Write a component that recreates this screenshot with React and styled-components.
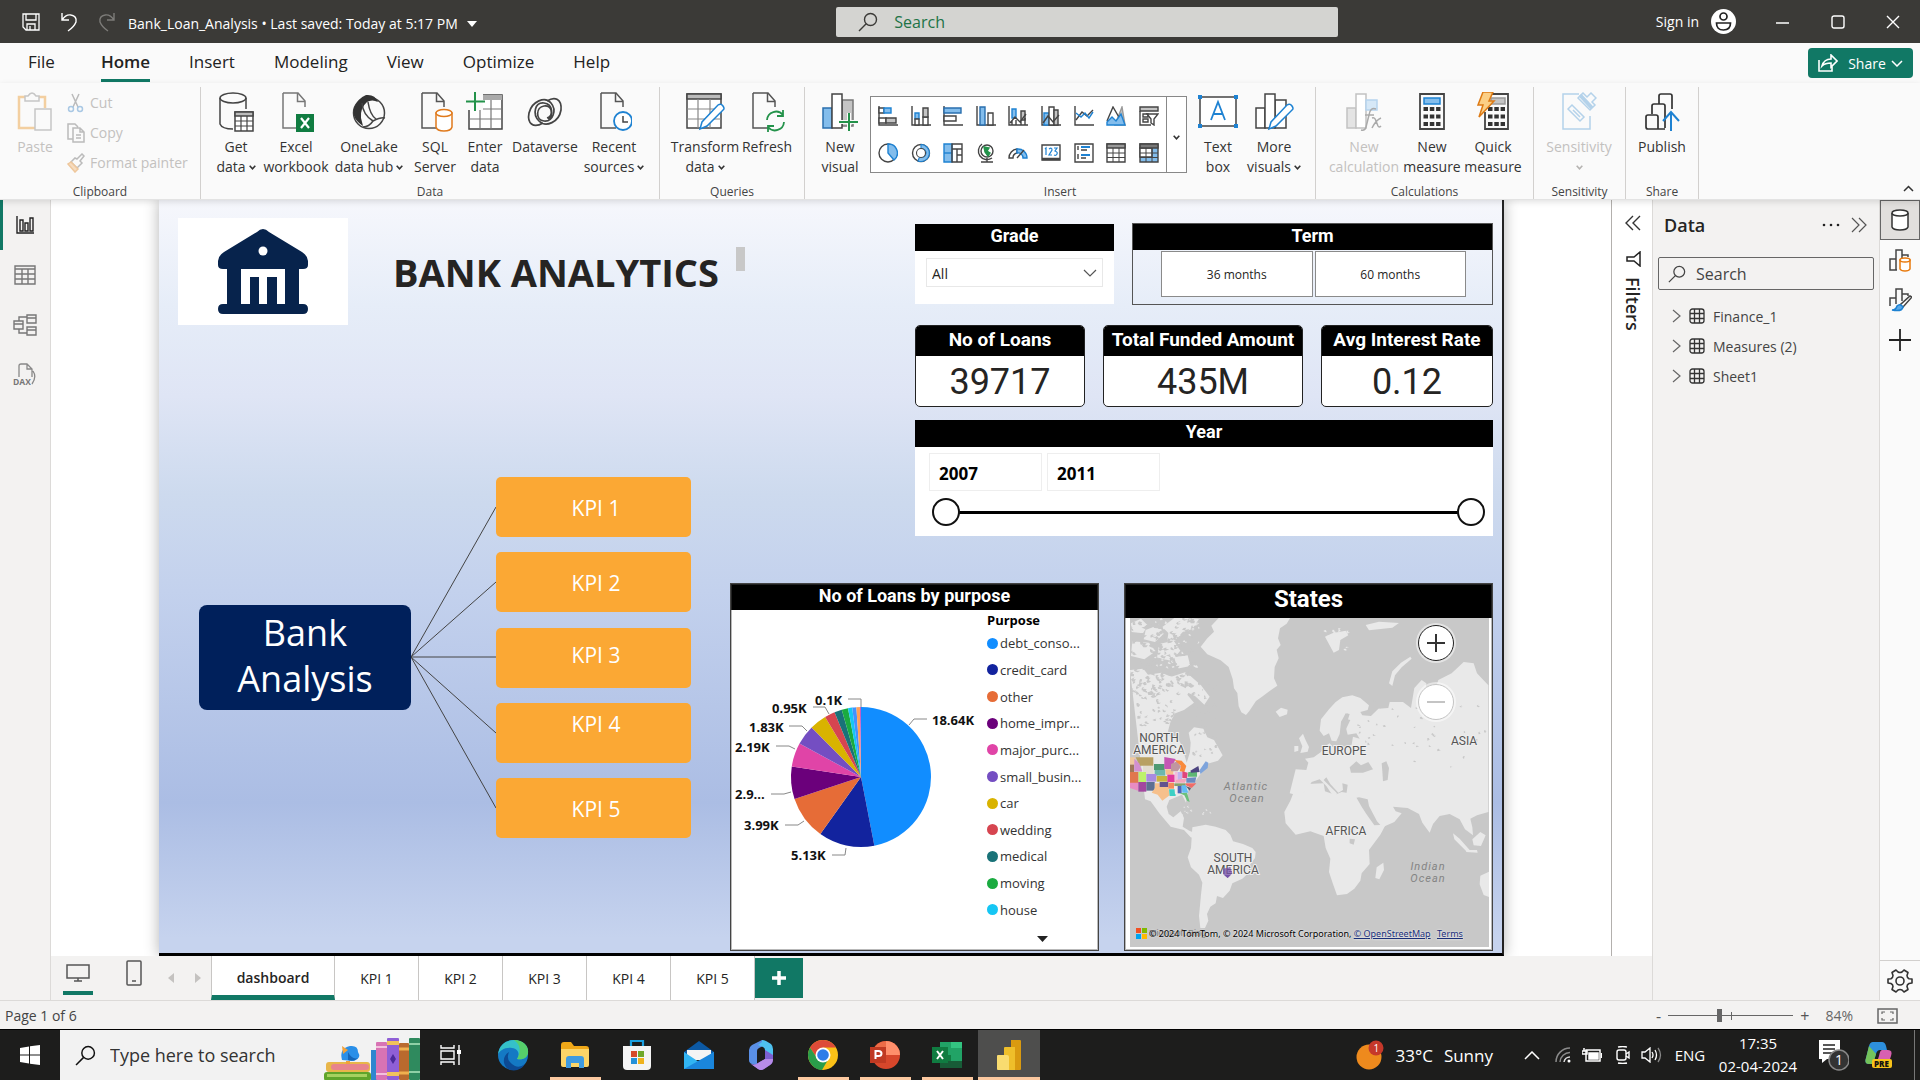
import React from "react";
import styled, { createGlobalStyle, css } from "styled-components";

const UI = `"Open Sans", "Noto Sans", sans-serif`;
const DIN = `Roboto, "Liberation Sans", sans-serif`;
const GREEN = "#117865";

const Global = createGlobalStyle`
  *, *::before, *::after { box-sizing: border-box; }
  html, body { margin: 0; padding: 0; }
  body { font-family: ${UI}; font-size: 14px; color: #252423; overflow: hidden; }
  button, input, select { font: inherit; color: inherit; }
  button { background: none; border: 0; padding: 0; margin: 0; cursor: pointer; }
  svg { display: block; flex: none; }
  h1, h2, ul, p { margin: 0; padding: 0; }
  ul { list-style: none; }
`;

/* ---------- icon helper ---------- */
const Icon = ({ w = 16, h = w, box, children, s = "#444", sw = 1.5, f = "none" }) => (
  <svg width={w} height={h} viewBox={box || `0 0 ${w} ${h}`} fill={f} stroke={s} strokeWidth={sw} aria-hidden="true">
    {children}
  </svg>
);
const BLUE = "#1e82d2";
const LIGHT = "#83bdec";
const MID = "#c4c4c4";

const Chevron = ({ s = "#333", w = 7 }) => (
  <Icon w={w} h={5} box="0 0 7 5" s={s} sw={1.6}><path d="M.7.8 3.5 3.8 6.3.8" /></Icon>
);
const Magnifier = ({ size = 20, s = "#444" }) => (
  <Icon w={size} box="0 0 20 20" s={s} sw={1.4}><circle cx="12.5" cy="7.5" r="6" /><path d="M8.2 11.8 1 19" /></Icon>
);
const Doc = ({ s = "#555" }) => <><path d="M5 1h15l7 8v6M5 1v35h15" stroke={s} fill="none" /><path d="M19.5 1v8.500H27" stroke={s} fill="none" /></>;
const Pencil = () => <path d="M15 37l2-7L33 13q3-2 5 1t0 4L22 34z" fill="#fff" stroke={BLUE} />;

const RI = {
  paste: <Icon w={36} h={40} s="#c6c6c6"><path d="M8 5H2v31h16" stroke="#f3cfa0" strokeWidth="2.500" /><path d="M22 5h6v11" stroke="#f3cfa0" strokeWidth="2.500" /><path d="M8 9V4h3q4-6 8 0h3v5z" /><path d="M18 17h16v21H18z" fill="#fafafa" /></Icon>,
  getData: <Icon w={36} h={40}><ellipse cx="15" cy="6" rx="13" ry="5" /><path d="M2 6v26q2 5 13 5M28 6v11" /><path d="M17 20h18v19H17z" fill="#fff" /><path d="M17 20h18v4H17z" fill="#bbb" /><path d="M23 24v15M29 24v15M17 29h18M17 34h18" strokeWidth="1.200" /></Icon>,
  excel: <Icon w={36} h={40}><Doc s="#777" /><path d="M18 22h18v18H18z" fill="#107c41" stroke="none" /><path d="m23 26 8 10m0-10-8 10" stroke="#fff" strokeWidth="2.200" /></Icon>,
  onelake: <Icon w={36} h={40}><circle cx="18" cy="21" r="15.500" /><path d="M15 3q9-1 12 7-6-3-11 0-7 6-6 16l2 8Q0 26 3 16 7 6 15 3z" fill="#333" stroke="none" /><path d="M11 11q1 12 11 18 8-4 12-3M17 10q2 13 8 17M22 29q-4 6-10 6" /></Icon>,
  sql: <Icon w={36} h={40}><Doc /><path d="M19 21v14q1 4 8 4t8-4V21z" fill="#fff" stroke="#e07a1c" /><ellipse cx="27" cy="21" rx="8" ry="3.500" fill="#fff" stroke="#e07a1c" /></Icon>,
  enter: <Icon w={38} h={40}><path d="M3 3h33v34H3z" fill="#fff" /><path d="M16 3h20v5H16z" fill="#aaa" stroke="none" /><path d="M3 17h33M3 27h33M14 8v29M25 8v29" stroke="#777" strokeWidth="1.200" /><path d="M0 0h17v18H0z" fill="#fafafa" stroke="none" /><path d="M9 0v19M0 9.500h19" stroke="#23924a" strokeWidth="2" /></Icon>,
  dataverse: <Icon w={38} h={40} sw={1.7}><path d="M17 31C7 37 1 31 3 21 6 9 19 4 25 11s2 19-7 18-8-14 0-15 10 9 4 13" /><path d="M21 9c8-5 15-2 14 9-2 12-15 18-22 11S9 10 18 11s10 13 3 15" /></Icon>,
  recent: <Icon w={36} h={40}><Doc /><circle cx="27" cy="29" r="9" fill="#fff" stroke={BLUE} strokeWidth="1.800" /><path d="M27 24v6h5" /></Icon>,
  transform: <Icon w={40} h={40}><path d="M2 2h34v34H2z" fill="#fff" /><path d="M2 2h34v5H2z" fill="#bbb" /><path d="M2 17h34M2 27h34M13 7v29M25 7v29" stroke="#888" strokeWidth="1.200" /><Pencil /></Icon>,
  refresh: <Icon w={38} h={40}><Doc /><path d="M19 28a9 9 0 0 1 16-5m0-5v6h-6M36 30a9 9 0 0 1-16 5m0 5v-6h6" stroke="#23924a" strokeWidth="1.800" /></Icon>,
  newVisual: <Icon w={38} h={40}><path d="M2 16h9v20H2z" fill={LIGHT} stroke="#2a6fae" /><path d="M21 8h11v26H21z" fill={MID} stroke="#777" /><path d="M11 2h10v34H11z" fill="#fff" /><path d="M18 30h19M28 21v18" stroke="#fafafa" strokeWidth="4" /><path d="M18 30h19M28 21v18" stroke="#23924a" strokeWidth="2" /></Icon>,
  textBox: <Icon w={40} h={40}><path d="M2 5h36v29H2z" fill="#fff" /><path d="M0 3h4v4H0zM36 3h4v4h-4zM0 32h4v4H0zM36 32h4v4h-4z" fill={BLUE} stroke="none" /><path d="m13 28 7-18 7 18m-12-6h10" stroke={BLUE} strokeWidth="1.800" /></Icon>,
  more: <Icon w={40} h={40}><path d="M2 16h9v20H2zM21 8h11v28H21z" fill="#fff" /><path d="M11 2h10v34H11z" fill="#fff" /><Pencil /></Icon>,
  newCalc: <Icon w={38} h={40} s="#c2c2c2"><path d="M2 16h9v20H2z" fill="#e4e4e4" /><path d="M11 2h10v34H11z" fill="#fff" /><path d="M21 8h11v10H21z" fill="#d6e8f7" stroke="#b6d4ee" /><path d="M31 17q-6-2-7 6l-3 12q-1 4-5 3M20 23h9M27 26q3-1 4 3l2 5q1 2 3 0M36 26q-5 2-9 10" stroke="#aaa" /></Icon>,
  newMeasure: <Icon w={26} h={40}><path d="M1 2h24v35H1z" strokeWidth="1.800" /><path d="M5 6h16v6H5z" fill={LIGHT} stroke={BLUE} /><path d="M4.500 17h17M4.500 24.500h17M4.500 32h17" stroke="#333" strokeWidth="4" strokeDasharray="4.500 1.800" /></Icon>,
  quick: <Icon w={34} h={40}><path d="M12 2h20v35H9V20" strokeWidth="1.800" /><path d="M15 6h14v6H15z" fill={MID} stroke="#999" /><path d="M12 17h17M12 24.500h17M12 32h17" stroke="#333" strokeWidth="4" strokeDasharray="4.500 1.800" /><path d="M7 0h10l-4 9h5L3 25l4-12H2z" fill="#fbcf86" stroke="#dd7a14" /></Icon>,
  sensitivity: <Icon w={36} h={40} s="#b4d2ea"><path d="M29 24v13H2V2h16" /><path d="m7 17 4-4 12 12-4 4zM12 18l7 7" /><path d="m17 6 5-5 4 4 4-4 5 5-4 4 3 3-5 5z" fill="#fafafa" /><path d="m19 3 12 13" strokeWidth="4" /></Icon>,
  publish: <Icon w={36} h={40} s="#333" sw={1.700}><path d="M21 37H4q-2 0-2-2V25q0-2 2-2h8q2 0 2 2v12M8 22v-8q0-2 2-2h9q2 0 2 2v22M15 12V4q0-2 2-2h9q2 0 2 2v13" /><path d="M27 39V20m-8 9 8-9 8 9" stroke={BLUE} strokeWidth="2" /></Icon>,
};

const g = (children) => <Icon w={20} box="0 0 20 20" sw={1.400}>{children}</Icon>;
const AX = <path d="M1 0v19h19" />;
const GALLERY = [
  ["Stacked bar chart", g(<>{AX}<path d="M1 2h5v5H1zM1 12h7v5H1z" fill="#fff" /><path d="M6 2h7v5H6z" fill={LIGHT} stroke={BLUE} /><path d="M8 12h10v5H8z" fill={MID} /></>)],
  ["Stacked column chart", g(<>{AX}<path d="M4 7h4v6H4z" fill={LIGHT} stroke={BLUE} /><path d="M4 13h4v6H4zM12 11h5v8h-5z" fill="#fff" /><path d="M12 2h5v9h-5z" fill={MID} /></>)],
  ["Clustered bar chart", g(<>{AX}<path d="M1 2h17v5H1z" fill={LIGHT} stroke="#2a6fae" /><path d="M1 10h12v5H1z" fill="#fff" /></>)],
  ["Clustered column chart", g(<>{AX}<path d="M4 1h5v18H4z" fill={LIGHT} stroke="#2a6fae" /><path d="M12 7h5v12h-5z" fill="#fff" /></>)],
  ["Line and stacked column chart", g(<>{AX}<path d="M4 3h4v9H4z" fill={LIGHT} stroke={BLUE} /><path d="M13 5h4v9h-4z" fill={MID} /><path d="m2 17 5-6 5 5 6-8M4 15v4M8 14v5M13 14v5M17 12v7" /></>)],
  ["Line and clustered column chart", g(<>{AX}<path d="M3 7h5v12H3z" fill={LIGHT} stroke={BLUE} /><path d="M8 1h5v18H8z" fill="#fff" /><path d="M13 4h4v15h-4z" fill={MID} /><path d="m2 17 5-7 5 6 6-7" /></>)],
  ["Line chart", g(<>{AX}<path d="m2 14 6-8 5 4 6-6" /><path d="m2 7 5 4 4-4 4 5 4-6" stroke={BLUE} /></>)],
  ["Area chart", g(<><path d="M9 19 16 1l3 18z" fill={MID} stroke="#999" /><path d="M1 15 7 1l7 12" /><path d="M1 19v-3l5-5 4 4 5-7 4 11z" fill={LIGHT} stroke={BLUE} /></>)],
  ["Slicer", g(<><path d="M1 1h18v4H1z" fill={MID} /><path d="M1 5v14h11M4 8h5v3H4zM4 13h5v3H4z" /><path d="M8 8h11l-4 5v6l-3-2v-4z" fill="#fff" /></>)],
  ["Pie chart", g(<><circle cx="10" cy="10" r="9" fill="#fff" /><path d="M10 1a9 9 0 0 1 6 16l-6-7z" fill={LIGHT} stroke={BLUE} /></>)],
  ["Donut chart", g(<><circle cx="10" cy="10" r="8.500" fill="#fff" /><path d="M10 1.500a8.500 8.500 0 1 1-3 16.500l1.500-4a4.500 4.500 0 1 0 1.500-8.500z" fill={LIGHT} stroke={BLUE} strokeWidth="1.100" /><circle cx="10" cy="10" r="4.500" fill="#fff" strokeWidth="1.100" /></>)],
  ["Treemap", g(<><path d="M1 1h8v18H1z" fill={LIGHT} stroke={BLUE} /><path d="M1 10h8" stroke={BLUE} /><path d="M9 1h10v18H9zM9 6h10M14 6v13M14 12h5" /></>)],
  ["Map", g(<><circle cx="11" cy="8" r="6" /><path d="M8 4l5 1-2 3 3 2-2 3-3-4z" fill="#23924a" stroke="#23924a" /><path d="M6 1a8.500 8.500 0 0 0 10 14M11 15v4M5 19h12" /></>)],
  ["Gauge", g(<><path d="M1 15a9 9 0 0 1 8-9v4a5 5 0 0 0-4 5z" fill="#fff" /><path d="M9 6a9 9 0 0 1 10 9h-4a5 5 0 0 0-6-5z" fill={LIGHT} stroke={BLUE} /><path d="m9 15 7-8" /></>)],
  ["Card", g(<><path d="M1 2h18v15H1z" fill="#fff" /><path d="M1 16h18" strokeWidth="2.500" /><path d="m4 6 1-1v7M8 6q3-2 3 1l-3 5h3M13 5h3l-2 3q3 1 2 3t-3 1" stroke={BLUE} strokeWidth="1.200" /></>)],
  ["Multi-row card", g(<><path d="M1 1h18v18H1zM4 3v4M4 11v5" fill="#fff" /><path d="M7 4h9M7 12h9" stroke={BLUE} strokeWidth="2" /><path d="M7 7h6M7 15h5" /></>)],
  ["Table", g(<><path d="M1 1h18v18H1z" fill="#fff" /><path d="M1 1h18v4H1z" fill="#999" /><path d="M1 10h18M1 14.500h18M7 5v14M13 5v14" strokeWidth="1" /></>)],
  ["Matrix", g(<><path d="M1 1h18v18H1z" fill={LIGHT} /><path d="M1 5h12v9H1z" fill="#fff" /><path d="M1 1h18v4H1z" fill="#777" /><path d="M1 10h18M1 14.500h18M7 5v14M13 5v14" strokeWidth="1" /></>)],
];

/* ---------- shell ---------- */
const Shell = styled.div`
  display: flex; flex-direction: column; height: 100vh; min-height: 760px; background: #fff;
`;
const TitleBar = styled.header`
  display: flex; align-items: center; flex: none; height: 43px; padding-left: 22px;
  background: #3b3a37; color: #fff;
`;
const Side = styled.div`display: flex; align-items: center; flex: ${(p) => p.$grow} 1 0; justify-content: ${(p) => p.$end ? "flex-end" : "flex-start"};`;
const FileName = styled.button`
  display: flex; align-items: center; gap: 9px; margin-left: 12px; line-height: 20px; white-space: nowrap; padding-top: 4px;
`;
const QuickButton = styled.button`display: grid; place-items: center; width: 18px; & + & { margin-left: 20px; }`;
const TopSearch = styled.label`
  display: flex; align-items: center; gap: 14px; width: 502px; height: 30px; padding: 0 22px;
  background: #d4d4d1; border-radius: 2px;
  input { flex: 1; min-width: 0; border: 0; background: none; outline: 0; font-size: 16px; color: #217346; }
  input::placeholder { color: #217346; opacity: 1; }
`;
const SignIn = styled.button`display: flex; align-items: center; gap: 12px; margin-right: 19px;`;
const WinButton = styled.button`width: 55px; height: 43px; display: grid; place-items: center;`;

const MenuRow = styled.nav`
  display: flex; align-items: center; flex: none; height: 40px; padding: 0 7px 0 28px; gap: 39px; background: #fafafa;
  > button:first-child { margin-right: 7px; }
`;
const MenuTab = styled.button`
  height: 38px; font-size: 17px; line-height: 34px; border-bottom: 3px solid transparent; color: #222;
  ${(p) => p.$active && css`font-weight: 600; border-color: ${GREEN};`}
`;
const ShareButton = styled.button`
  display: flex; align-items: center; justify-content: center; gap: 10px; margin: 0 0 0 auto; width: 105px; height: 30px;
  border-radius: 4px; background: ${GREEN}; color: #fff;
  span { display: flex; align-items: center; gap: 5px; }
`;

const Ribbon = styled.div`
  display: flex; flex: none; height: 117px; padding-top: 4px; background: #fafafa;
  border-bottom: 1px solid #e3e3e3; box-shadow: 0 2px 6px rgba(0,0,0,.12); z-index: 2;
`;
const Group = styled.section`
  display: flex; flex-direction: column; width: ${(p) => p.$w}px; height: 112px; border-right: 1px solid #d2d0ce; flex: none;
`;
const GroupBody = styled.div`display: flex; flex: 1; padding: 1px 0 0 ${(p) => p.$pad || 0}px;`;
const GroupLabel = styled.div`font-size: 12px; line-height: 14px; text-align: center; color: #444;`;
const ToolButton = styled.button`
  display: flex; flex-direction: column; align-items: center; width: ${(p) => p.$w}px; height: 90px; flex: none; padding-top: 4px;
  font-size: 14px; line-height: 20px; white-space: nowrap; color: ${(p) => (p.disabled ? "#c3c1bf" : "#333")};
  > svg { margin: 0 0 5px; }
  > span { display: flex; align-items: center; gap: 3px; min-height: 20px; }
`;
const SmallTools = styled.div`display: flex; flex-direction: column; margin-left: 9px;`;
const SmallTool = styled.button`
  display: flex; align-items: center; gap: 5px; height: 30px; line-height: 20px; color: #c3c1bf; white-space: nowrap;
`;
const GalleryBox = styled.div`
  display: flex; width: 317px; height: 77px; margin: 8px 8px 0 6px; background: #fff; border: 1px solid #888;
`;
const GalleryGrid = styled.div`display: grid; grid-template-columns: repeat(9, 1fr); flex: 1; padding: 1px; align-items: center; justify-items: center;`;
const GalleryMore = styled.button`width: 20px; border-left: 1px solid #888; display: grid; place-items: center; padding-top: 6px;`;
const Collapse = styled.button`margin: auto 6px 7px auto;`;

const Tool = ({ icon, w, a, b, drop, disabled }) => (
  <ToolButton $w={w} disabled={disabled}>
    {RI[icon]}
    <span>{a}</span>
    {(b || drop) && <span>{b}{drop && <Chevron s={disabled ? "#b5b3b1" : "#333"} />}</span>}
  </ToolButton>
);

/* ---------- body ---------- */
const Body = styled.div`display: flex; flex: 1; min-height: 0;`;
const ViewRail = styled.nav`display: flex; flex-direction: column; width: 51px; flex: none; background: #f3f2f1; border-right: 1px solid #dcdad8;`;
const ViewButton = styled.button`
  height: 50px; display: grid; place-items: center; border-left: 3px solid ${(p) => (p.$active ? GREEN : "transparent")}; padding-right: 3px;
`;
const Center = styled.div`display: flex; flex-direction: column; flex: 1; min-width: 0;`;
const Work = styled.div`display: flex; flex: 1; min-height: 0;`;
const CanvasArea = styled.main`flex: 1; display: flex; min-width: 0; padding: 0 107px 0 108px; background: #fff;`;
const Report = styled.div`
  display: flex; flex: 1; min-width: 0; border-right: 2px solid #222; border-bottom: 3px solid #000;
  background: linear-gradient(#f6f7fc 0%, #e6edf8 14%, #dfe5f5 26%, #cddaee 39%, #c3d1ed 52%, #abbde4 80%, #c6d3ee 98%);
  box-shadow: 0 0 14px rgba(0,0,0,.3);
`;
const Story = styled.div`flex: 1; min-width: 0; padding: 18px 0 0 19px;`;
const Brand = styled.div`display: flex; align-items: center; gap: 45px;`;
const LogoBox = styled.div`width: 170px; height: 107px; background: #fff; display: grid; place-items: center; flex: none;`;
const BigTitle = styled.h1`
  position: relative; font-size: 38px; line-height: 50px; font-weight: 700; white-space: nowrap; color: #252423;
  &::after { content: ""; position: absolute; left: calc(100% + 17px); top: 0; width: 9px; height: 24px; background: #c8c8c8; }
`;
const MindMap = styled.div`display: flex; align-items: center; margin: 152px 0 0 21px; height: 361px;`;
const RootNode = styled.div`
  width: 212px; height: 105px; border-radius: 8px; background: #00205b; color: #fff; text-align: center;
  font-size: 36px; line-height: 46px; padding-top: 5px;
`;
const Leaves = styled.div`display: flex; flex-direction: column; justify-content: space-between; height: 361px;`;
const Leaf = styled.a`
  display: flex; align-items: center; justify-content: center; width: 195px; height: 60px; border-radius: 5px;
  background: #fba834; color: #fff; font-size: 21px; text-decoration: none; padding: 2px 0 ${(p) => p.$lift}px 5px;
`;
const Panels = styled.div`display: flex; flex-direction: column; width: 772px; flex: none; padding: 23px 9px 2px 0;`;
const Upper = styled.div`display: flex; flex-direction: column; padding-left: 185px;`;
const Row = styled.div`display: flex; align-items: center; gap: 18px; margin-bottom: ${(p) => p.$mb}px;`;
const VisTitle = styled.h2`
  flex: none; height: ${(p) => p.$h || 27}px; background: #000; color: #fff;
  font: 700 ${(p) => p.$size || 18}px/${(p) => (p.$h || 27) - 3}px ${DIN}; text-align: center; white-space: nowrap;
`;
const Grade = styled.div`display: flex; flex-direction: column; width: 199px; height: 80px; background: #fff;`;
const SelectWrap = styled.div`
  display: flex; align-items: center; margin: 7px 11px; height: 29px; border: 1px solid #e8e8e8; padding-right: 5px;
  select { appearance: none; flex: 1; border: 0; background: none; padding: 2px 5px 0; height: 27px; outline: 0; }
`;
const Term = styled.div`display: flex; flex-direction: column; flex: 1; height: 82px; border: 1px solid #555;`;
const TermOptions = styled.div`display: flex; gap: 2px; padding: 1px 26px 0 28px;`;
const TermButton = styled.button`flex: 1; height: 46px; border: 1px solid #8a8a8a; background: #fff; font-size: 12px;`;
const Card = styled.div`width: ${(p) => p.$w}px; height: 82px; border: 1px solid #222; border-radius: 5px; overflow: hidden; background: #fff;`;
const CardValue = styled.div`font: 400 36px/52px ${DIN}; text-align: center; color: #252423;`;
const Year = styled.div`height: 116px; background: #fff; margin-bottom: 47px;`;
const YearInputs = styled.div`
  display: flex; gap: 5px; padding: 6px 14px 0;
  input { width: 113px; height: 38px; border: 1px solid #eee; padding: 2px 9px 0; font-size: 17px; font-weight: 700; color: #000; background: #fff; }
`;
const RangePair = styled.div`
  position: relative; height: 28px; margin: 7px 8px 0 17px;
  &::before { content: ""; position: absolute; left: 14px; right: 14px; top: 13px; height: 3px; background: #000; }
  input { position: absolute; inset: 0; width: 100%; height: 28px; margin: 0; appearance: none; background: none; pointer-events: none; }
  input::-webkit-slider-thumb { appearance: none; pointer-events: auto; width: 28px; height: 28px; border-radius: 50%; border: 2px solid #111; background: #fff; }
`;
const Charts = styled.div`display: flex; justify-content: space-between; flex: 1; min-height: 0;`;
const ChartBox = styled.section`display: flex; flex-direction: column; width: 369px; border: 1px solid #444; outline: 1px solid rgba(80,80,80,.4); outline-offset: -2px; background: #fff;`;
const PieBody = styled.div`display: flex; flex: 1; min-height: 0;`;
const Legend = styled.div`display: flex; flex-direction: column; width: 111px; padding-bottom: 8px; font-size: 13px; color: #333;`;
const LegendTitle = styled.div`font-weight: 700; line-height: 20px; color: #000;`;
const LegendList = styled.ul`display: flex; flex-direction: column; flex: 1;`;
const LegendItem = styled.li`
  display: flex; align-items: center; flex: 1; gap: 2px; line-height: 18px; white-space: nowrap;
  &::before { content: ""; width: 11px; height: 11px; border-radius: 50%; background: ${(p) => p.$c}; }
`;
const LegendMore = styled.button`align-self: center; margin-top: 13px;`;
const MapTitle = styled.span`font-size: 24px; line-height: 31px;`;
const MapFrame = styled.div`position: relative; flex: 1; min-height: 0; margin: 0 3px 3px 5px; background: #c8c8c8; overflow: hidden; > svg { width: 100%; height: 100%; }`;
const MapButtons = styled.div`position: absolute; top: 7px; right: 35px; display: grid; gap: 23px;`;
const MapButton = styled.button`
  width: 36px; height: 36px; border-radius: 50%; background: #fff; border: 1px solid ${(p) => (p.disabled ? "#c4c4c4" : "#222")};
  box-shadow: 0 0 0 2px rgba(255,255,255,.5); display: grid; place-items: center;
`;
const Credits = styled.p`
  position: absolute; left: 19px; bottom: 5px; font: 9px/16px "Noto Sans", sans-serif; color: #000; white-space: nowrap;
  text-shadow: 0 0 2px #fff;
  a { color: #1a2f7a; margin-right: 4px; }
`;
const BingMark = styled.span`position: absolute; left: 6px; bottom: 8px; display: flex; align-items: center; gap: 2px; font: 9px/12px "Liberation Sans", sans-serif; color: #777;`;

/* ---------- side panes ---------- */
const FilterPane = styled.aside`
  display: flex; flex-direction: column; align-items: center; gap: 20px; width: 41px; flex: none; padding: 15px 0 0 2px; border-left: 1px solid #b3b0ad; background: #fff;
`;
const FilterLabel = styled.div`writing-mode: vertical-rl; display: flex; align-items: center; gap: 10px; font-size: 18px; line-height: 20px; font-weight: 600;`;
const DataPane = styled.aside`width: 227px; flex: none; background: #f3f2f1; border-left: 1px solid #dcdad8; padding: 10px 5px;`;
const PaneHead = styled.div`display: flex; align-items: center; padding: 0 7px 0 6px; height: 30px; gap: 11px; h2 { flex: 1; font-size: 18px; font-weight: 600; }`;
const PaneSearch = styled.label`
  display: flex; align-items: center; gap: 8px; height: 33px; margin: 17px 0 11px; padding: 0 9px; border: 1px solid #666; border-radius: 2px;
  input { min-width: 0; flex: 1; border: 0; outline: 0; background: none; font-size: 16px; }
  input::placeholder { color: #444; opacity: 1; }
`;
const TreeRow = styled.li`button { display: flex; align-items: center; gap: 8px; height: 30px; padding-left: 14px; color: #444; }`;
const PaneRail = styled.nav`display: flex; flex-direction: column; width: 41px; flex: none; background: #fafafa; border-left: 1px solid #dcdad8;`;
const PaneButton = styled.button`
  display: grid; place-items: center; height: 40px; ${(p) => p.$active && "background:#e1dfdd;border:1px solid #666;"}
  ${(p) => p.$last && "margin-top:auto;border-top:1px solid #d2d0ce;"}
`;

/* ---------- page tabs, status ---------- */
const PageTabs = styled.nav`display: flex; flex: none; height: 44px; background: #f3f2f1; padding-left: 12px;`;
const LayoutButton = styled.button`
  width: 30px; height: 39px; display: grid; place-items: center; margin-right: ${(p) => p.$mr || 0}px; border-bottom: 4px solid ${(p) => (p.$active ? GREEN : "transparent")}; padding-bottom: 2px;
`;
const Arrow = styled.button`width: 27px; display: grid; place-items: center;`;
const PageTab = styled.button`
  width: ${(p) => (p.$active ? 124 : 84)}px; background: #fff; border-right: 1px solid #c8c6c4; font-size: 14px;
  border-bottom: ${(p) => (p.$active ? `5px solid ${GREEN}` : "0")}; border-left: ${(p) => (p.$active ? "1px solid #c8c6c4" : "0")};
  font-weight: ${(p) => (p.$active ? 600 : 400)}; padding: ${(p) => (p.$active ? "4px 0 0" : 0)};
`;
const AddPage = styled.button`width: 48px; height: 40px; margin-top: 2px; background: ${GREEN}; display: grid; place-items: center;`;
const Status = styled.footer`
  display: flex; align-items: center; flex: none; height: 29px; padding: 1px 22px 0 5px; background: #f3f2f1; border-top: 1px solid #dcdad8; color: #444;
  > span:first-child { margin-right: auto; }
`;
const Zoom = styled.div`
  display: flex; align-items: center; gap: 7px; margin-right: 16px; font-size: 16px; color: #555; line-height: 20px;
`;
const ZoomTrack = styled.div`
  position: relative; width: 125px; height: 14px;
  &::before { content: ""; position: absolute; left: 50%; top: 3px; width: 1px; height: 8px; background: #666; }
  input { display: block; width: 100%; height: 14px; margin: 0; appearance: none; background: linear-gradient(#666,#666) center / 100% 1px no-repeat; }
  input::-webkit-slider-thumb { appearance: none; width: 5px; height: 13px; background: #666; }
`;
const Percent = styled.span`margin-right: 24px; color: #666;`;

/* ---------- taskbar ---------- */
const Taskbar = styled.footer`display: flex; flex: none; height: 51px; background: #1d1d1c; border-top: 1px solid #000; color: #fff;`;
const Start = styled.button`width: 60px; display: grid; place-items: center;`;
const TaskSearch = styled.label`
  display: flex; align-items: center; width: 360px; background: #f2f2f2; padding-left: 15px; gap: 14px; overflow: hidden; color: #222;
  input { flex: 1; min-width: 0; border: 0; outline: 0; background: none; font-size: 18px; padding: 0; }
  input::placeholder { color: #333; opacity: 1; }
`;
const TaskButton = styled.button`
  width: 62px; display: grid; place-items: center; position: relative; background: ${(p) => (p.$active ? "#4e4e4d" : "none")};
  ${(p) => p.$open && css`&::after { content: ""; position: absolute; bottom: 0; height: 3px; left: ${p.$active ? 0 : 6}px; right: ${p.$active ? 0 : 5}px; background: #fcc9a0; }`}
`;
const Tray = styled.div`display: flex; align-items: center; margin-left: auto; font-size: 17px; padding-right: 5px; > button { display: grid; place-items: center; height: 50px; }`;
const Weather = styled.button`&& { display: flex; align-items: center; gap: 11px; margin-right: 18px; }`;
const TrayIcon = styled.button`width: ${(p) => p.$w}px;`;
const LangText = styled.span`font-size: 15px;`;
const Clock = styled.button`width: 90px; line-height: 23px; font-size: 15px; && { display: block; } `;
const Corner = styled.div`width: 1px; height: 50px; margin-left: 21px; background: #777;`;

/* ---------- data ---------- */
const PURPOSES = [
  ["debt_conso...", 18.64, "#118dff"], ["credit_card", 5.13, "#12239e"], ["other", 3.99, "#e66c37"],
  ["home_impr...", 2.98, "#6b007b"], ["major_purc...", 2.19, "#e044a7"], ["small_busin...", 1.83, "#744ec2"],
  ["car", 1.55, "#d9b300"], ["wedding", 0.95, "#d64550"], ["medical", 0.69, "#197278"],
  ["moving", 0.58, "#1aab40"], ["house", 0.38, "#15c6f4"], ["vacation", 0.38, "#4092ff"],
  ["educational", 0.32, "#ffa058"], ["renewable_energy", 0.1, "#be5dc9"],
];
const CALLOUTS = [
  ["18.64K", 200, 116, "177,116 182,110 195,110"], ["0.1K", 83, 96, "116,90 129,90 129,98"],
  ["0.95K", 40, 104, "81,98 93,98 97,105"], ["1.83K", 17, 123, "57,117 70,117 75,122"],
  ["2.19K", 3, 143, "44,137 57,137 63,140"], ["2.9...", 3, 190, "39,185 52,185 59,183"],
  ["3.99K", 12, 221, "53,216 66,216 72,212"], ["5.13K", 59, 251, "100,246 113,246 114,239"],
];
const pieSlices = () => {
  const total = PURPOSES.reduce((t, p) => t + p[1], 0);
  let a = -Math.PI / 2;
  return PURPOSES.map(([name, v, c]) => {
    const b = a + (v / total) * Math.PI * 2;
    const pt = (t) => `${(129 + 70 * Math.cos(t)).toFixed(2)} ${(168 + 70 * Math.sin(t)).toFixed(2)}`;
    const d = `M129 168L${pt(a)}A70 70 0 ${b - a > Math.PI ? 1 : 0} 1 ${pt(b)}Z`;
    a = b;
    return <path key={name} d={d} fill={c} />;
  });
};
const PieChart = () => (
  <svg width="256" height="330" viewBox="-1 1 256 330" role="img" aria-label="No of Loans by purpose">
    {pieSlices()}
    {CALLOUTS.map(([t, x, y, pts]) => (
      <g key={t}>
        <polyline points={pts} fill="none" stroke="#888" />
        <text x={x} y={y} fontFamily="Open Sans, sans-serif" fontSize="13" fontWeight="700" fill="#111">{t}</text>
      </g>
    ))}
  </svg>
);

/* jagged specks for archipelagos and lakes */
const specks = (seed, n, x0, y0, w, h, size) => {
  let s = seed;
  const r = () => ((s = (s * 16807) % 2147483647) / 2147483647);
  let d = "";
  for (let i = 0; i < n; i++) {
    const x = x0 + r() * w, y = y0 + r() * h;
    d += `M${x.toFixed(0)} ${y.toFixed(0)}`;
    for (let k = 0; k < 6; k++) {
      const t = (k / 6) * 6.28, q = size * (0.3 + r());
      d += `L${(x + Math.cos(t) * q * 1.3).toFixed(0)} ${(y + Math.sin(t) * q).toFixed(0)}`;
    }
    d += "Z";
  }
  return d;
};
const STATES = [
  ["M63 562h16v22H63z", "#f0c9a0"], ["M80 562h53v25H92z", "#b8a062"], ["M76 566l14 14 10 24H76z", "#d38fd0"], ["M63 584h12v22H63z", "#a0785a"],
  ["M102 588h32v24h-32z", "#e2dccf"], ["M135 582h32v18h-32z", "#4f9a72"], ["M137 600h32v17h-32z", "#6cb8ac"], ["M166 561l34 6-14 30h-20z", "#c556b4"],
  ["M63 606h25v34H63z", "#e0774e"], ["M89 606h22v30H89z", "#bdf26b"], ["M112 612h30v23h-30z", "#a88be0"], ["M143 618h32v17h-32z", "#c8b33e"],
  ["M169 598h24v16h-22z", "#f6bf8c"], ["M175 614h22v22h-22z", "#e0389c"], ["M63 638l24 0v24l-24-8z", "#e88cc2"], ["M88 636h24v29H88z", "#a3469f"],
  ["M112 636h25v26h-25z", "#5c6f92"], ["M138 640h14v10h26l4 26-22 16-14-18-18-6 10-14z", "#f6c08c"], ["M152 636h26v15h-26z", "#64528e"], ["M178 638h17v18h-17z", "#f58c5c"],
  ["M186 582l18-8 12 16-10 14h-20z", "#c096a0"], ["M196 570l22 2 14 16-6 18-14-2 4-16z", "#f98a3c"], ["M197 606h9v26h-9z", "#f5b9dc"], ["M206 606h13v24h-13z", "#c3b0ee"],
  ["M220 604l16 4-2 16h-14z", "#e0447c"], ["M238 606h26v14h-28z", "#5db673"], ["M244 602l24-14 4 18-26 2z", "#4d4580"], ["M272 600l18-26 8 4-2 16-22 18z", "#7ea4dc"],
  ["M200 630l34-6-6 14h-30z", "#f3a6bc"], ["M232 624l30-2-4 16h-26z", "#6c8bc0"], ["M196 640h34v8h-34z", "#87a06b"], ["M230 640h32l-14 14-18-8z", "#ef6c68"],
  ["M180 658h18l2 20h-18z", "#3ccfc4"], ["M196 650h12v22h-10z", "#f4eaea"], ["M206 648h12v22h-12z", "#4b67b8"], ["M218 646h12l8 22h-18z", "#62bdf5"], ["M212 670l22-2 8 28-8-4-8-16z", "#6cc07c"], ["M230 648l16 6-4 8z", "#5e5e6e"],
];
const Label = ({ x, y, children, sea }) => (
  <text x={x} y={y} textAnchor="middle" fontFamily="Roboto, sans-serif" fontSize={sea ? 11 : 12} fontStyle={sea ? "italic" : "normal"} letterSpacing={sea ? 1 : 0}
    fill={sea ? "#848484" : "#555"} stroke="#eee" strokeWidth={sea ? 0 : 2} paintOrder="stroke">{children}</text>
);
const WorldMap = () => (
  <svg viewBox="0 0 359 331" preserveAspectRatio="xMidYMid slice" role="img" aria-label="Loans by state">
    <g transform="scale(.33333) translate(-63 -141)">
      <g fill="#e9e9e9">
        <path d="M275 230l20-25 20-20-8-18 25-26h213l-12 20-20 14-6 30 8 20-12 14 6 26-12 26-2 34 10 22-20 14-24 18-20 14-20 30-10 12-14-8-8-18-4-40-10-14-4-28-12-36-24-20-40-18z" />
        <path d="M63 300l40-4 14 18 40-6 30 12 44-14 4 18-10 20 24 6-14 24 20 24-30 22-26 10-14 24-8 30 8 18 26 10 8 16 14 50 10-32 2-28-6-30 16-16 28 4 12 26 20 8 26 46-14 16-34 10-10 18-28 40-16 14-8 44-12-24-38 16-8 20 6 22 14 10 22-18 10 20-4 26 20 12 18 8 10 20-24-8-20-22-40-10-34-40-26-36-17-6z" />
        <path d="M200 141l70 6-20 30-30 10-20 24-26 8 4-30-18-18zM66 160l30-14 20 20-14 24-34-4zM110 180l40-16 14 28-26 24-34-8zM70 214l50 4 20 26-34 24-40-10zM150 222l44-10 20 30-26 30-44-8zM196 262l40-6 8 32-40 8zM130 312l60 8 6 26-36 4zM206 330l36-14 34 30 26 34-16 24-28-26-30-14z" />
        <path d="M250 772l40-8 30 6 30 10 14 14 8 20 30 8 28 12 10 12-2 18-16 22-4 24-18 16-30 14-8 22-20 22-18-6-4 22-16 10-10 22 4 20-10 22h-14l-4-36 6-64 4-36-10-24-24-22-10-30 10-28z" />
        <path d="M560 652l36-10 48-2 4 24 30 10 20-8 38 6 22 38 14 22 24 34 34-2-16 30-34 46 2 42-24 28-4 22-18 24-22 16-30 4-12-34-12-36 4-40-14-32-6-36-40-14-44 10-30-34-4-34 18-34z" />
        <path d="M823 878l2 22-14 28-12-4 4-32zM500 425l16-12 20 6-2 14-22 8zM570 505l12-14 8 20 10 20-4 14-22 4 6-20zM556 528l12 0 0 14-12 4zM648 200l22-10 40-8 8 14-24 14-4 30-16 8zM840 340l10-36 26-26 28-18 4 6-30 26-20 24-8 32zM770 165l40-10 60 4-20 14-70 8z" />
        <path d="M560 598l32 2 6-22-10-12 26-4 22-16 12-18 14-8 10 12 30 0 26-8 4-24 20 6-10-16-26 4-6-24 12-38-12-2-14 26-4 36-10 22-14-2-8-22-16 8-12-16 4-34 24-30 20-22 20-14 30-6 24 8 26 22-4 14-22 6 6 10 26 2 22-22 30-2 4-18 40 0 24 18 10-60 22-24 14 10-4 40 30-20 10-30 40-20 36-34 30 4 10 30 34 36v380l-34 10-20 10 6 26 2 24-24-18-16-30-30-16-30 6-20 24-10 26-22-30-10-26-34-18-44-4 8 14 18 6-22 26-36 16-16-18-24-46-4-20-26-6-22 4-16-12 4-30-16-4 2 20-14 8-24-26-12-20-8 8 40 40-8 14-24-36-20-20-24 8-16 26-26 14-24-6zM1032 790l20 16 30 34-10 4-36-36zM1070 840h34l2 8-34-2zM1090 808l24-22 16 10-14 32-22-2zM1140 905l-26 12-2 26 12 32 16 6z" />
      </g>
      <g fill="#c8c8c8">
        <path d={specks(77, 120, 66, 144, 190, 230, 7)} />
        <path d={specks(12, 60, 66, 320, 130, 150, 5)} />
        <path d={specks(5, 26, 850, 400, 280, 190, 4)} />
        <path d={specks(31, 22, 680, 380, 150, 160, 4)} />
        <path d={specks(91, 40, 255, 340, 70, 220, 4)} />
        <path d="M722 592l20-18 14 12 22-10 14 22-30 10-36 0zM818 580l14-6 8 20-4 36-14 4-2-30zM696 470l14-24 14 4-16 34 14 22-16 16-8-22zM722 806l16 2-4 16-12-4z" />
      </g>
      <g fill="#e9e9e9"><path d={specks(44, 40, 140, 144, 130, 150, 4)} /><path d={specks(8, 16, 650, 180, 66, 60, 5)} /><path d={specks(15, 10, 220, 710, 90, 25, 3)} /></g>
      {STATES.map(([d, c], i) => <path key={i} d={d} fill={c} />)}
      <path d="M342 896l22-4 6 18-14 14-14-12z" fill="#7552a8" />
    </g>
    <Label x={29} y={125}>NORTH</Label><Label x={29} y={137}>AMERICA</Label>
    <Label x={214} y={138}>EUROPE</Label><Label x={334} y={128}>ASIA</Label><Label x={216} y={218}>AFRICA</Label>
    <Label x={103} y={245}>SOUTH</Label><Label x={103} y={257}>AMERICA</Label>
    <path transform="scale(.33333) translate(-63 -141)" d="M342 896l22-4 6 18-14 14-14-12z" fill="#7552a8" fillOpacity=".75" />
    <Label sea x={116} y={173}>Atlantic</Label><Label sea x={117} y={185}>Ocean</Label>
    <Label sea x={298} y={253}>Indian</Label><Label sea x={298} y={265}>Ocean</Label>
  </svg>
);

const TableGrid = <Icon w={16} box="0 0 16 16" s="#333" sw={1.300}><rect x="1" y="1" width="14" height="14" rx="2.500" /><path d="M5.500 1v14M10.500 1v14M1 5.500h14M1 10.500h14" /></Icon>;

const APPS = [
  ["Microsoft Edge", 0, 0, <Icon w={32} box="0 0 32 32" s="none"><circle cx="16" cy="16" r="15" fill="#1479c4" /><path d="M1 16C2 5 10 1 17 1c9 0 15 6 14 13-1 6-7 7-11 6 3-4 2-10-5-11C8 8 2 12 1 16z" fill="#35c1c9" /><path d="M17 1c9 0 15 6 14 13-1 6-7 7-11 6 4-7 4-14-3-19z" fill="#56cf6a" /><path d="M12 13q-4 9 6 14 5 2 10-2-5 8-15 6C6 28 4 18 12 13z" fill="#0c4a94" /></Icon>],
  ["File Explorer", 1, 0, <Icon w={30} h={28} s="none"><path d="M1 4q0-3 3-3h7l3 4h12q3 0 3 3v16H1z" fill="#f0a818" /><path d="M1 8h28v16q0 2-2 2H3q-2 0-2-2z" fill="#fcd568" /><path d="M6 27V18q0-3 3-3h12q3 0 3 3v9h-5v-5h-8v5z" fill="#3f9be0" /></Icon>],
  ["Microsoft Store", 0, 0, <Icon w={30} h={32} s="none"><path d="M9 7V2h12v5" stroke="#1aa0e0" strokeWidth="2.200" /><path d="M1 7h28v20q0 4-4 4H5q-4 0-4-4z" fill="#f4f4f4" /><path d="M9 12h6v6H9z" fill="#d64a2a" /><path d="M16 12h6v6h-6z" fill="#6fa82a" /><path d="M9 19h6v6H9z" fill="#2490d8" /><path d="M16 19h6v6h-6z" fill="#efb21c" /></Icon>],
  ["Mail", 0, 0, <Icon w={30} h={30} s="none"><path d="M0 12 15 1l15 11v6H0z" fill="#0c59a4" /><path d="M3 10h24v10H3z" fill="#f4f4f4" /><path d="M0 12 15 22 30 12v17H0z" fill="#31b4f2" /><path d="M0 29 30 12v17z" fill="#1a86dc" /></Icon>],
  ["Microsoft 365", 0, 0, <Icon w={28} h={32} s="none"><path d="M15 1 5 6q-3 2-3 5v10q0 3 3 4l5 2V12q0-2 2-3l8-4z" fill="#5a8fe6" /><path d="M15 1q2 0 4 1l5 3q2 2 2 5v10l-8-4v-5q0-2-2-3l-5-2 4-3z" fill="#4ec2f0" /><path d="M26 16v5q0 3-3 5l-6 4q-3 2-6 0l-7-5q4 2 7-1l7-4V11z" fill="#7c5fd0" /><path d="M4 25q4 2 7-1l7-4 8 0q0 4-3 6l-6 4q-3 2-6 0z" fill="#b78be8" /></Icon>],
  ["Google Chrome", 1, 0, <Icon w={32} box="0 0 32 32" s="none"><circle cx="16" cy="16" r="15" fill="#fbc117" /><path d="M3 8.500A15 15 0 0 1 29 8.500H16L10 19z" fill="#dd4b38" /><path d="M3 8.500A15 15 0 0 0 15 31l7-12-12 0z" fill="#2a9d4a" /><circle cx="16" cy="16" r="7.500" fill="#fff" /><circle cx="16" cy="16" r="5.800" fill="#2f7de8" /></Icon>],
  ["PowerPoint", 1, 0, <Icon w={30} h={30} s="none"><circle cx="16" cy="15" r="14" fill="#d8472b" /><path d="M16 1a14 14 0 0 1 14 14H16z" fill="#ff8f6b" /><path d="M16 1A14 14 0 0 0 3 10l13 5z" fill="#ed6c47" /><path d="M0 7h16v16H0z" fill="#c03a22" /><path d="M5.500 19v-8h3q3 0 3 2.500T8.500 16h-3" stroke="#fff" strokeWidth="2" /></Icon>],
  ["Excel", 1, 0, <Icon w={30} h={28} s="none"><path d="M8 1h22v26H8z" fill="#21a366" /><path d="M19 1h11v6H19z" fill="#33c481" /><path d="M8 14h11v6H8z" fill="#107c41" /><path d="M8 20h22v7H8z" fill="#185c37" /><path d="M0 6h16v16H0z" fill="#107c41" /><path d="m5 10 6 8m0-8-6 8" stroke="#fff" strokeWidth="2" /></Icon>],
  ["Power BI", 1, 1, <Icon w={26} h={32} s="none"><path d="M15 1h9q1 0 1 1v28q0 1-1 1h-9z" fill="#d99a10" /><path d="M8 9q0-1 1-1h10v23H8z" fill="#efbf2a" /><path d="M1 17q0-1 1-1h9q2 0 2 2v13H2q-1 0-1-1z" fill="#f9dc70" /></Icon>],
];

const Books = (
  <svg width="96" height="50" viewBox="0 0 96 50" aria-hidden="true">
    <rect y="42" width="47" height="9" rx="3" fill="#5fa52b" /><rect x="3" y="44" width="40" height="3" fill="#a5d25f" />
    <rect x="2" y="32" width="44" height="10" rx="3" fill="#e8b64a" /><rect x="7" y="34" width="38" height="6" rx="3" fill="#e8848c" />
    <path d="M18 30q-3-12 8-14 8-1 8 6 4 6-4 9z" fill="#2a8fe8" /><path d="m18 16 6 4-5 4zM22 31v3h4v-3z" fill="#f2a23a" /><path d="M24 22q4 8 10 6-4 4-10 2z" fill="#1565b8" />
    <rect x="47" y="20" width="6" height="30" fill="#2f86cf" /><rect x="52" y="12" width="11" height="38" rx="1" fill="#d873b4" /><path d="M52 17h11M52 44h11" stroke="#f3c1dd" strokeWidth="2" />
    <rect x="63" y="8" width="12" height="42" rx="1" fill="#8f5fd6" /><path d="M63 13h12M63 44h12" stroke="#f0c35c" strokeWidth="4" /><path d="m69 24 3 5-3 5-3-5z" fill="#4d2a9b" />
    <rect x="75" y="13" width="10" height="37" rx="1" fill="#b96a2e" /><path d="M75 19h10M75 43h10" stroke="#f0b04e" strokeWidth="3" />
    <rect x="85" y="8" width="11" height="42" rx="1" fill="#2f8a5e" /><path d="M85 14h11M85 42h11" stroke="#8fd0a6" strokeWidth="2" />
  </svg>
);

const KPIS = [["KPI 1", 0], ["KPI 2", 0], ["KPI 3", 8], ["KPI 4", 20], ["KPI 5", 0]];

export default function App() {
  return (
    <>
      <Global />
      <Shell>
        <TitleBar>
          <Side $grow={7}>
            <QuickButton aria-label="Save"><Icon w={18} s="#fff" sw={1.300}><path d="M1 1h16v16H4l-3-3zM4 1v6h10V1M5 17v-6h8v6M8 13v4" /></Icon></QuickButton>
            <QuickButton aria-label="Undo"><Icon w={18} h={20} s="#fff" sw={1.400}><path d="M2 1v7h7M2 8q4-6 9-5 6 1 5 7-2 5-8 9" /></Icon></QuickButton>
            <QuickButton aria-label="Redo"><Icon w={18} h={20} s="#7d7c79" sw={1.400}><path d="M16 1v7H9M16 8q-4-6-9-5-6 1-5 7 2 5 8 9" /></Icon></QuickButton>
            <FileName>Bank_Loan_Analysis • Last saved: Today at 5:17 PM <Icon w={10} h={6} f="#fff" s="none"><path d="M0 0h10L5 6z" /></Icon></FileName>
          </Side>
          <TopSearch><Magnifier s="#3b3a37" /><input placeholder="Search" aria-label="Search" /></TopSearch>
          <Side $grow={5} $end>
            <SignIn>Sign in
              <Icon w={25} s="#222" sw={1.700}><circle cx="12.500" cy="12.500" r="12.500" fill="#fff" stroke="none" /><circle cx="12.500" cy="7.500" r="3.500" /><path d="M5.500 14h14q0 7-7 7t-7-7z" /></Icon>
            </SignIn>
            <WinButton aria-label="Minimize"><Icon w={14} s="#fff"><path d="M0 8h13" /></Icon></WinButton>
            <WinButton aria-label="Maximize"><Icon w={14} s="#fff" sw={1.400}><rect x="1" y="1" width="12" height="12" rx="2" /></Icon></WinButton>
            <WinButton aria-label="Close"><Icon w={14} s="#fff" sw={1.400}><path d="m1 1 12 12M13 1 1 13" /></Icon></WinButton>
          </Side>
        </TitleBar>

        <MenuRow>
          {["File", "Home", "Insert", "Modeling", "View", "Optimize", "Help"].map((t) => <MenuTab key={t} $active={t === "Home"}>{t}</MenuTab>)}
          <ShareButton><Icon w={20} h={18} s="#fff" sw={1.600}><path d="M1 6v11h13v-5M4 12q2-7 9-7V1l6 6-6 6V9q-6 0-9 3z" /></Icon><span>Share<Icon w={12} h={7} s="#fff"><path d="m1 1 5 5 5-5" /></Icon></span></ShareButton>
        </MenuRow>

        <Ribbon>
          <Group $w={201}>
            <GroupBody $pad={12}>
              <Tool icon="paste" w={46} a="Paste" disabled />
              <SmallTools>
                <SmallTool disabled><Icon w={18} h={20} s="#bbb"><path d="m5 1 6 13M12 1 6 14" /><circle cx="4" cy="16" r="2.500" stroke="#a9c8e4" /><circle cx="13" cy="16" r="2.500" stroke="#a9c8e4" /></Icon>Cut</SmallTool>
                <SmallTool disabled><Icon w={18} h={20} s="#bbb"><path d="M6 16H1V1h7l3 3M6 5h7l4 4v10H6zM13 5v4h4M9 12h5M9 15h5" /></Icon>Copy</SmallTool>
                <SmallTool disabled><Icon w={18} h={20} s="#bbb"><path d="m10 6 5-5 2 2-4 5 2 2-5 5-6-6 4-4z" /><path d="m4 9-3 2 7 8 3-3z" fill="#f6dcc0" stroke="#eec79c" /></Icon>Format painter</SmallTool>
              </SmallTools>
            </GroupBody>
            <GroupLabel>Clipboard</GroupLabel>
          </Group>
          <Group $w={459}>
            <GroupBody $pad={9}>
              <Tool icon="getData" w={52} a="Get" b="data" drop />
              <Tool icon="excel" w={68} a="Excel" b="workbook" />
              <Tool icon="onelake" w={78} a="OneLake" b="data hub" drop />
              <Tool icon="sql" w={54} a="SQL" b="Server" />
              <Tool icon="enter" w={46} a="Enter" b="data" />
              <Tool icon="dataverse" w={74} a="Dataverse" />
              <Tool icon="recent" w={64} a="Recent" b="sources" drop />
            </GroupBody>
            <GroupLabel>Data</GroupLabel>
          </Group>
          <Group $w={145}>
            <GroupBody $pad={12}>
              <Tool icon="transform" w={66} a="Transform" b="data" drop />
              <Tool icon="refresh" w={58} a="Refresh" />
            </GroupBody>
            <GroupLabel>Queries</GroupLabel>
          </Group>
          <Group $w={511}>
            <GroupBody $pad={11}>
              <Tool icon="newVisual" w={48} a="New" b="visual" />
              <GalleryBox>
                <GalleryGrid>{GALLERY.map(([n, i]) => <button key={n} aria-label={n}>{i}</button>)}</GalleryGrid>
                <GalleryMore aria-label="More visual types"><Chevron /></GalleryMore>
              </GalleryBox>
              <Tool icon="textBox" w={46} a="Text" b="box" />
              <Tool icon="more" w={66} a="More" b="visuals" drop />
            </GroupBody>
            <GroupLabel>Insert</GroupLabel>
          </Group>
          <Group $w={218}>
            <GroupBody $pad={12}>
              <Tool icon="newCalc" w={72} a="New" b="calculation" disabled />
              <Tool icon="newMeasure" w={64} a="New" b="measure" />
              <Tool icon="quick" w={58} a="Quick" b="measure" />
            </GroupBody>
            <GroupLabel>Calculations</GroupLabel>
          </Group>
          <Group $w={92}>
            <GroupBody $pad={12}><Tool icon="sensitivity" w={66} a="Sensitivity" drop disabled /></GroupBody>
            <GroupLabel>Sensitivity</GroupLabel>
          </Group>
          <Group $w={73}>
            <GroupBody $pad={10}><Tool icon="publish" w={52} a="Publish" /></GroupBody>
            <GroupLabel>Share</GroupLabel>
          </Group>
          <Collapse aria-label="Collapse ribbon"><Icon w={11} h={7} s="#333"><path d="m1 6 4.500-4.500L10 6" /></Icon></Collapse>
        </Ribbon>

        <Body>
          <ViewRail>
            <ViewButton $active aria-label="Report view"><Icon w={20} s="#222" sw={1.400}><path d="M2 1v17h17M5 5h3v11H5zM10 8h3v8h-3zM15 3h3v13h-3z" /></Icon></ViewButton>
            <ViewButton aria-label="Table view"><Icon w={22} h={22} s="#777" sw={1.400}><path d="M1 2h20v18H1zM1 5h20M1 10h20M1 15h20M8 5v15M14 5v15" /></Icon></ViewButton>
            <ViewButton aria-label="Model view"><Icon w={24} s="#777" sw={1.400}><path d="M14 2h9v8h-9zM14 5h9M1 8h9v8H1zM1 11h9M14 14h9v8h-9zM14 17h9M6 8V4h8M6 16v4h8" /></Icon></ViewButton>
            <ViewButton aria-label="DAX query view">
              <Icon w={24} s="#888" sw={1.300}><path d="M6 14V3q0-2 2-2h6l5 5v8M14 1v5h5M20 8q4 6-1 13" /><text x="0" y="22" fontSize="8.500" fontWeight="700" fontFamily="Open Sans" fill="#777" stroke="none">DAX</text></Icon>
            </ViewButton>
          </ViewRail>

          <Center>
            <Work>
              <CanvasArea>
                <Report>
                  <Story>
                    <Brand>
                      <LogoBox>
                        <svg width="90" height="86" viewBox="0 0 90 86" aria-hidden="true">
                          <path d="M45 0q3 0 6 3l33 20q6 4 6 9v4q0 4-5 4h-4v35h4q5 0 5 5t-5 5H5q-5 0-5-5t5-5h4V40H5q-5 0-5-4v-4q0-5 6-9L39 3q3-3 6-3z" fill="#07234c" />
                          <path d="M23 40h44v35h-8V48H49v27h-8V48h-8v27H23z" fill="#fff" /><path d="M32 48h9v27h-9zM50 48h9v27h-9z" fill="#07234c" /><circle cx="45" cy="22" r="4.500" fill="#fff" />
                        </svg>
                      </LogoBox>
                      <BigTitle>BANK ANALYTICS</BigTitle>
                    </Brand>
                    <MindMap>
                      <RootNode>Bank<br />Analysis</RootNode>
                      <svg width="85" height="361" viewBox="0 0 85 361" stroke="#444" fill="none" aria-hidden="true">
                        {[30, 105, 180, 256, 331].map((y) => <path key={y} d={`M0 180 85 ${y}`} />)}
                      </svg>
                      <Leaves>{KPIS.map(([k, lift]) => <Leaf key={k} href="#" $lift={lift}>{k}</Leaf>)}</Leaves>
                    </MindMap>
                  </Story>
                  <Panels>
                    <Upper>
                      <Row $mb={20}>
                        <Grade>
                          <VisTitle as="label" htmlFor="grade">Grade</VisTitle>
                          <SelectWrap><select id="grade"><option>All</option></select><Icon w={14} h={8} s="#555" sw={1.200}><path d="m1 1 6 6 6-6" /></Icon></SelectWrap>
                        </Grade>
                        <Term>
                          <VisTitle $h={26}>Term</VisTitle>
                          <TermOptions><TermButton>36 months</TermButton><TermButton>60 months</TermButton></TermOptions>
                        </Term>
                      </Row>
                      <Row $mb={13}>
                        <Card $w={170}><VisTitle $h={30} $size={19}>No of Loans</VisTitle><CardValue>39717</CardValue></Card>
                        <Card $w={200}><VisTitle $h={30} $size={19}>Total Funded Amount</VisTitle><CardValue>435M</CardValue></Card>
                        <Card $w={172}><VisTitle $h={30} $size={19}>Avg Interest Rate</VisTitle><CardValue>0.12</CardValue></Card>
                      </Row>
                      <Year>
                        <VisTitle>Year</VisTitle>
                        <YearInputs><input aria-label="From year" defaultValue="2007" /><input aria-label="To year" defaultValue="2011" /></YearInputs>
                        <RangePair>
                          <input type="range" aria-label="Start year" min="2007" max="2011" defaultValue="2007" />
                          <input type="range" aria-label="End year" min="2007" max="2011" defaultValue="2011" />
                        </RangePair>
                      </Year>
                    </Upper>
                    <Charts>
                      <ChartBox>
                        <VisTitle $h={26}>No of Loans by purpose</VisTitle>
                        <PieBody>
                          <PieChart />
                          <Legend>
                            <LegendTitle>Purpose</LegendTitle>
                            <LegendList>{PURPOSES.slice(0, 11).map(([n, , c]) => <LegendItem key={n} $c={c}>{n}</LegendItem>)}</LegendList>
                            <LegendMore aria-label="Next legend items"><Icon w={11} h={6} f="#222" s="none"><path d="M0 0h11L5.500 6z" /></Icon></LegendMore>
                          </Legend>
                        </PieBody>
                      </ChartBox>
                      <ChartBox>
                        <VisTitle $h={34}><MapTitle>States</MapTitle></VisTitle>
                        <MapFrame>
                          <WorldMap />
                          <MapButtons>
                            <MapButton aria-label="Zoom in"><Icon w={18} s="#333" sw={2}><path d="M9 0v18M0 9h18" /></Icon></MapButton>
                            <MapButton aria-label="Zoom out" disabled><Icon w={18} s="#c4c4c4" sw={2}><path d="M0 9h18" /></Icon></MapButton>
                          </MapButtons>
                          <BingMark><Icon w={11} s="none"><path d="M0 0h5v5H0z" fill="#f25022" /><path d="M6 0h5v5H6z" fill="#7fba00" /><path d="M0 6h5v5H0z" fill="#00a4ef" /><path d="M6 6h5v5H6z" fill="#ffb900" /></Icon>Microsoft Bing</BingMark>
                          <Credits>© 2024 TomTom, © 2024 Microsoft Corporation, <a href="#">© OpenStreetMap</a> <a href="#">Terms</a></Credits>
                        </MapFrame>
                      </ChartBox>
                    </Charts>
                  </Panels>
                </Report>
              </CanvasArea>
              <FilterPane>
                <button aria-label="Expand filters"><Icon w={16} s="#333" sw={1.400}><path d="M8 1 1 8l7 7M15 1 8 8l7 7" /></Icon></button>
                <FilterLabel><Icon w={16} s="#222" sw={1.500}><path d="M15 1v14L9 10H2V6h7z" /></Icon>Filters</FilterLabel>
              </FilterPane>
            </Work>
            <PageTabs>
              <LayoutButton $active $mr={26} aria-label="Desktop layout"><Icon w={24} h={18} s="#555"><path d="M1 1h22v13H1zM12 14v3M8 17h8" /></Icon></LayoutButton>
              <LayoutButton $mr={8} aria-label="Mobile layout"><Icon w={16} h={26} s="#555"><rect x="1" y="1" width="14" height="24" rx="1" /><path d="M6 21h4" /></Icon></LayoutButton>
              <Arrow aria-label="Previous page" disabled><Icon w={6} h={10} f="#c4c2c0" s="none"><path d="M6 0v10L0 5z" /></Icon></Arrow>
              <Arrow aria-label="Next page" disabled><Icon w={6} h={10} f="#c4c2c0" s="none"><path d="M0 0v10l6-5z" /></Icon></Arrow>
              {["dashboard", "KPI 1", "KPI 2", "KPI 3", "KPI 4", "KPI 5"].map((t, i) => <PageTab key={t} $active={i === 0}>{t}</PageTab>)}
              <AddPage aria-label="Add page"><Icon w={14} s="#fff" sw={3.500}><path d="M7 0v14M0 7h14" /></Icon></AddPage>
            </PageTabs>
          </Center>

          <DataPane>
            <PaneHead>
              <h2>Data</h2>
              <button aria-label="More options"><Icon w={18} h={4} f="#222" s="none"><circle cx="2" cy="2" r="1.300" /><circle cx="9" cy="2" r="1.300" /><circle cx="16" cy="2" r="1.300" /></Icon></button>
              <button aria-label="Collapse pane"><Icon w={16} s="#555" sw={1.200}><path d="m1 1 7 7-7 7M8 1l7 7-7 7" /></Icon></button>
            </PaneHead>
            <PaneSearch><Magnifier size={18} /><input placeholder="Search" aria-label="Search data" /></PaneSearch>
            <ul>
              {["Finance_1", "Measures (2)", "Sheet1"].map((t) => (
                <TreeRow key={t}><button><Icon w={9} h={14} s="#666" sw={1.200}><path d="m1 1 7 6-7 6" /></Icon>{TableGrid}{t}</button></TreeRow>
              ))}
            </ul>
          </DataPane>
          <PaneRail>
            <PaneButton $active aria-label="Data"><Icon w={18} h={22} s="#333"><path d="M1 4v14q1 3 8 3t8-3V4" fill="#fff" /><ellipse cx="9" cy="4" rx="8" ry="3" fill="#fff" /></Icon></PaneButton>
            <PaneButton aria-label="Build visual"><Icon w={24} s="#444"><path d="M9 22H2V11h6M8 22V2h6v20M14 7h6v2" /><path d="M12 12v9q1 2 5 2t5-2v-9z" fill="#fff" stroke="#e8790c" /><ellipse cx="17" cy="12" rx="5" ry="2" fill="#fff" stroke="#e8790c" /></Icon></PaneButton>
            <PaneButton aria-label="Format visual"><Icon w={24} s="#444"><path d="M2 18v-8h6M8 16V1h6v12M14 6h6v2" /><path d="M22 8l2 1-9 10-3-2z" fill="#fff" /><path d="M4 22q4 0 5-4 3-3 6 1-1 5-11 3z" fill="#5aa9e8" stroke={BLUE} /></Icon></PaneButton>
            <PaneButton aria-label="Add pane"><Icon w={22} s="#222" sw={1.800}><path d="M11 0v22M0 11h22" /></Icon></PaneButton>
            <PaneButton $last aria-label="Settings"><Icon w={26} s="#333" sw={1.600}><path d="m9 2 2 2q2 1 4 0l2-2 4 2.500-1 3q0 2 2 3.200l3 .3v4l-3 .5q-2 1-2 3l1 3-4 2.500-2-2q-2-1-4 0l-2 2-4-2.500 1-3q0-2-2-3l-3-.5v-4l3-.3q2-1.200 2-3.200l-1-3z" strokeLinejoin="round" /><circle cx="13" cy="13" r="4" /></Icon></PaneButton>
          </PaneRail>
        </Body>

        <Status>
          <span>Page 1 of 6</span>
          <Zoom><button aria-label="Zoom out">-</button><ZoomTrack><input type="range" aria-label="Zoom" defaultValue="41" /></ZoomTrack><button aria-label="Zoom in">+</button></Zoom>
          <Percent>84%</Percent>
          <button aria-label="Fit to page"><Icon w={21} h={16} s="#666"><path d="M1 1h19v14H1z" /><path d="M5 6V4h3M13 4h3v2M5 10v2h3M13 12h3v-2" strokeWidth="1.200" /></Icon></button>
        </Status>

        <Taskbar>
          <Start aria-label="Start"><Icon w={20} f="#fff" s="none"><path d="M0 3l9-1.500V9.500H0zM10 1.300 20 0v9.500H10zM0 10.500h9v8L0 17zM10 10.500h10V20l-10-1.300z" /></Icon></Start>
          <TaskSearch><Magnifier size={21} s="#111" /><input placeholder="Type here to search" aria-label="Type here to search" />{Books}</TaskSearch>
          <TaskButton aria-label="Task view"><Icon w={22} h={20} s="#fff" sw={1.400}><path d="M1 0v3h13V0M1 6h13v8H1zM1 20v-3h13v3M19 0v20" /><path d="M17 5h4v4h-4z" fill="#fff" stroke="none" /></Icon></TaskButton>
          {APPS.map(([n, open, active, i]) => <TaskButton key={n} aria-label={n} $open={open} $active={active}>{i}</TaskButton>)}
          <Tray>
            <Weather><Icon w={28} h={30} s="none"><circle cx="13" cy="17" r="12.500" fill="#ee8a1d" /><circle cx="20" cy="8" r="7.500" fill="#c5382a" /><text x="17.500" y="12" fontSize="10" fontFamily="Open Sans" fill="#fff">1</text></Icon><span>33°C</span><span>Sunny</span></Weather>
            <TrayIcon $w={42} aria-label="Show hidden icons"><Icon w={16} h={9} s="#fff"><path d="m1 8 7-7 7 7" /></Icon></TrayIcon>
            <TrayIcon $w={20} aria-label="Network"><Icon w={16} s="#8a8a8a"><path d="M1 15A14 14 0 0 1 15 1M5 15A10 10 0 0 1 15 5.500" /><path d="M9 15a6 6 0 0 1 6-5" stroke="#ddd" /><circle cx="14" cy="14" r="1.500" fill="#fff" stroke="none" /></Icon></TrayIcon>
            <TrayIcon $w={38} aria-label="Battery"><Icon w={20} h={14} s="#fff"><path d="M4 2h14v11H4z" /><path d="M7 5h9v6H7z" fill="#fff" /><path d="M2 0v3M0 3h5v3H0zM19.500 5v5" /></Icon></TrayIcon>
            <TrayIcon $w={24} aria-label="Meet now"><Icon w={16} h={18} s="#fff" sw={1.400}><rect x="2" y="4" width="9" height="10" rx="2" /><path d="m11 8 3-2v6l-3-2M3 1q5-1 9 0M3 17q5 1 9 0" /></Icon></TrayIcon>
            <TrayIcon $w={32} aria-label="Volume"><Icon w={21} h={16} s="#fff" sw={1.300}><path d="M1 5h3l5-4v14l-5-4H1zM11 5q2 3 0 6M14 3q3 5 0 10" /><path d="M17 1q5 7 0 14" stroke="#888" /></Icon></TrayIcon>
            <TrayIcon $w={46} aria-label="Language"><LangText>ENG</LangText></TrayIcon>
            <Clock>17:35<br />02-04-2024</Clock>
            <TrayIcon $w={62} aria-label="Notifications"><Icon w={30} h={32} s="none"><path d="M0 1h21v19H8l-5 4v-4H0z" fill="#fff" /><path d="M4 6h12M4 10h12M4 14h9" stroke="#222" strokeWidth="1.300" /><circle cx="20" cy="21" r="10" fill="#333" stroke="#888" /><text x="16" y="26" fontSize="14" fontFamily="Open Sans" fill="#fff">1</text></Icon></TrayIcon>
            <TrayIcon $w={28} aria-label="Copilot"><Icon w={28} h={28} s="none"><path d="M8 1h9q3 0 4 4l1 4h-7q-3 0-4 4l-3 10H4q-5 0-3-6L4 5q1-4 4-4z" fill="#2d8fdc" /><path d="M4 5 1 17q-2 6 3 6h4l3-10z" fill="#74c35a" /><path d="M17 9h6q5 0 3 6l-2 6q-1 3-5 3h-8l3-9q1-6 3-6z" fill="#d860b0" /><rect x="7" y="18" width="20" height="9" rx="2" fill="#f7c21a" /><text x="9" y="26" fontSize="8" fontWeight="800" fontFamily="Open Sans" fill="#111">PRE</text></Icon></TrayIcon>
            <Corner />
          </Tray>
        </Taskbar>
      </Shell>
    </>
  );
}
